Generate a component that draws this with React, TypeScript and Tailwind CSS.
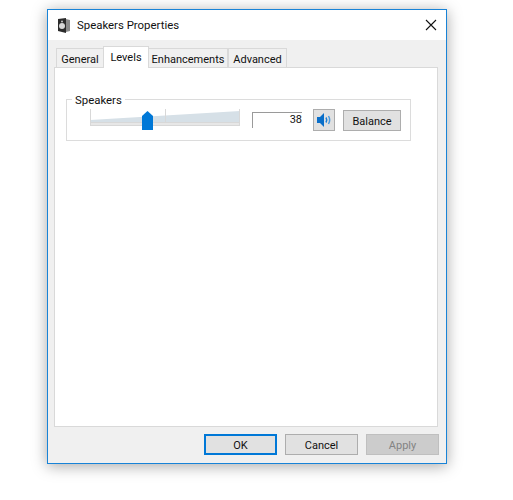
import React from "react";

const font = { fontFamily: 'Roboto, "Noto Sans", sans-serif' };

const SpeakerBoxIcon: React.FC = () => (
    <svg width="14" height="15" viewBox="0 0 14 15">
        <path d="M1 1 L9 0 L9 15 L1 13 Z" fill="#2b2b2b" />
        <path d="M9 1 L13 2 L13 13 L9 14 Z" fill="#8a8a8a" />
        <circle cx="5" cy="8" r="3" fill="#d8d8d8" />
        <circle cx="5" cy="3.5" r="1" fill="#c8c8c8" />
    </svg>
);

const VolumeIcon: React.FC = () => (
    <svg width="16" height="16" viewBox="0 0 16 16">
        <path d="M1 5 H4 L8 1 V15 L4 11 H1 Z" fill="#0a6fc9" />
        <path d="M10 5.5 Q11.5 8 10 10.5" fill="none" stroke="#1f7fd4" strokeWidth="1.5" />
        <path d="M12.5 4 Q14.8 8 12.5 12" fill="none" stroke="#4a9be0" strokeWidth="1.5" />
    </svg>
);

const Tab: React.FC<{ label: string; width: string; active?: boolean }> = ({ label, width, active }) => (
    <div
        className={
            active
                ? `${width} relative z-10 -mb-px -mx-px h-[22px] pt-[1px] bg-white border border-b-0 border-[#d9d9d9] flex items-center justify-center text-[11px] text-[#111]`
                : `${width} h-[19px] pt-[4px] bg-[#f0f0f0] border border-b-0 border-[#d9d9d9] flex items-center justify-center text-[11px] text-[#111]`
        }
    >
        {label}
    </div>
);

const DialogButton: React.FC<{ label: string; kind?: "default" | "disabled" }> = ({ label, kind }) => {
    let cls = "bg-[#e1e1e1] border border-[#adadad] text-[#111]";
    if (kind === "default") cls = "bg-[#e1e1e1] border-2 border-[#0078d7] text-[#111]";
    if (kind === "disabled") cls = "bg-[#cccccc] border border-[#bfbfbf] text-[#838383]";
    return <div className={`w-[73px] h-[21px] pt-[3px] flex items-center justify-center text-[11px] ${cls}`}>{label}</div>;
};

const LevelSlider: React.FC = () => (
    <div className="relative w-[150px] h-[30px]">
        <svg width="150" height="30" viewBox="0 0 150 30" className="block">
            <path d="M0 15 L150 6 V17 H0 Z" fill="#d6e0e7" />
            <path d="M0.5 4 V17 M75.5 4 V17 M149.5 4 V17" stroke="#d8d8d8" />
            <rect x="0.5" y="17.5" width="149" height="3" fill="#e7e7e7" stroke="#d8d8d8" />
        </svg>
        <div className="absolute left-[52px] top-[6px] w-[11px] h-[19px]">
            <svg width="11" height="19" viewBox="0 0 11 19" className="block">
                <path d="M0 5 L5.5 0 L11 5 V19 H0 Z" fill="#0078d7" />
            </svg>
        </div>
    </div>
);

export default function App() {
    return (
        <div className="w-[513px] h-[500px] bg-white overflow-hidden pt-[9px] pl-[47px]" style={font}>
            <div className="w-[400px] h-[455px] flex flex-col bg-[#f0f0f0] border border-[#1883d7] shadow-[0_2px_14px_rgba(0,0,0,0.35)]">
                <div className="h-[30px] shrink-0 bg-white flex items-center pl-[9px] pr-[9px]">
                    <SpeakerBoxIcon />
                    <span className="ml-[6px] pt-[1px] text-[11.4px] text-[#111] flex-1">Speakers Properties</span>
                    <svg width="12" height="12" viewBox="0 0 12 12">
                        <path d="M1 1 L11 11 M11 1 L1 11" stroke="#111" strokeWidth="1.1" />
                    </svg>
                </div>

                <div className="flex-1 flex flex-col pl-[6px] pr-[8px] pt-[7px] pb-[7px]">
                    <div className="flex items-end h-[20px] pl-[2px]">
                        <Tab label="General" width="w-[48px]" />
                        <Tab label="Levels" width="w-[46px]" active />
                        <Tab label="Enhancements" width="w-[80px]" />
                        <Tab label="Advanced" width="w-[59px]" />
                    </div>

                    <div className="h-[360px] bg-white border border-[#d9d9d9] pt-[31px] pl-[11px]">
                        <div className="relative w-[345px] h-[42px] border border-[#dcdcdc] flex items-center pl-[23px]">
                            <span className="absolute left-[5px] -top-[8px] bg-white px-[3px] text-[11.4px] leading-[16px] text-[#111]">
                                Speakers
                            </span>
                            <LevelSlider />
                            <div className="ml-[12px] w-[50px] h-[16px] border-t border-l border-[#9a9a9a] text-[11px] leading-[14px] text-right text-[#111]">
                                38
                            </div>
                            <div className="ml-[11px] w-[22px] h-[22px] bg-[#e1e1e1] border border-[#adadad] flex items-center justify-center">
                                <VolumeIcon />
                            </div>
                            <div className="ml-[8px] mt-[1px] w-[58px] h-[21px] pt-[3px] bg-[#e1e1e1] border border-[#adadad] flex items-center justify-center text-[11px] text-[#111]">
                                Balance
                            </div>
                        </div>
                    </div>

                    <div className="flex justify-end gap-[8px] mt-[7px] -mr-[1px]">
                        <DialogButton label="OK" kind="default" />
                        <DialogButton label="Cancel" />
                        <DialogButton label="Apply" kind="disabled" />
                    </div>
                </div>
            </div>
        </div>
    );
}
